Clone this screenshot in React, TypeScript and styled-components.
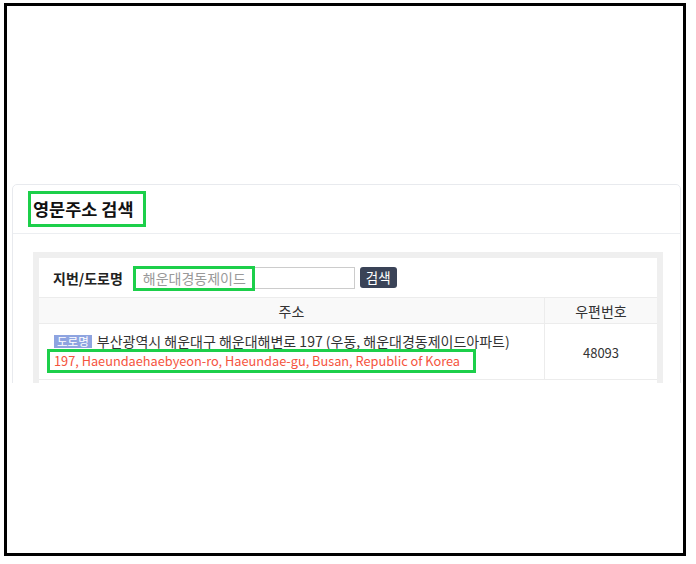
import styled, { createGlobalStyle } from 'styled-components';

const GREEN = '#1ccf4a';

const GlobalStyle = createGlobalStyle`
  body {
    margin: 0;
    background: #fff;
    font-family: "Noto Sans CJK KR", "Noto Sans", sans-serif;
    color: #333;
  }
`;

export default function App() {
  return (
    <>
      <GlobalStyle />
      <Frame>
        <Viewport>
          <Card>
            <CardHeader>
              <Title>
                <Mark>영문주소 검색</Mark>
              </Title>
            </CardHeader>
            <CardBody>
              <Panel>
                <PanelInner>
                  <SearchRow>
                    <Label>지번/도로명</Label>
                    <InputWrap>
                      <SearchInput defaultValue="해운대경동제이드" />
                      <InputMark />
                    </InputWrap>
                    <SearchButton type="button">검색</SearchButton>
                  </SearchRow>
                  <Table>
                    <thead>
                      <tr>
                        <Th $first>주소</Th>
                        <Th>우편번호</Th>
                      </tr>
                    </thead>
                    <tbody>
                      <tr>
                        <AddressCell>
                          <KoreanLine>
                            <Badge>도로명</Badge>
                            부산광역시 해운대구 해운대해변로 197 (우동, 해운대경동제이드아파트)
                          </KoreanLine>
                          <EnglishLine>
                            197, Haeundaehaebyeon-ro, Haeundae-gu, Busan, Republic of Korea
                          </EnglishLine>
                        </AddressCell>
                        <ZipCell>48093</ZipCell>
                      </tr>
                    </tbody>
                  </Table>
                </PanelInner>
              </Panel>
            </CardBody>
          </Card>
        </Viewport>
      </Frame>
    </>
  );
}

const Frame = styled.div`
  box-sizing: border-box;
  margin: 3px 0 0 4px;
  width: 682px;
  height: 553px;
  border: 3px solid #000;
  padding: 178px 2px 0 5px;
`;

const Viewport = styled.div`
  height: 199px;
  overflow: hidden;
`;

const Card = styled.div`
  border: 1px solid #e8eaee;
  border-radius: 5px;
  background: #fff;
`;

const CardHeader = styled.div`
  padding: 6px 15px;
  border-bottom: 1px solid #eceef1;
`;

const Title = styled.h3`
  margin: 0;
  font-size: 17.5px;
  font-weight: 700;
  color: #111;
  line-height: 30px;
`;

const Mark = styled.span`
  display: inline-block;
  border: 3px solid ${GREEN};
  padding: 0 9px 0 2px;
`;

const CardBody = styled.div`
  padding: 18px 17px 40px 20px;
`;

const Panel = styled.div`
  background: #efefef;
  padding: 6px;
`;

const PanelInner = styled.div`
  background: #fff;
  padding-bottom: 30px;
`;

const SearchRow = styled.div`
  display: flex;
  align-items: center;
  height: 39px;
  padding-left: 14px;
`;

const Label = styled.span`
  font-size: 14px;
  font-weight: 700;
  color: #222;
  margin-right: 11px;
`;

const InputWrap = styled.div`
  position: relative;
  display: flex;
`;

const SearchInput = styled.input`
  box-sizing: border-box;
  width: 221px;
  height: 22px;
  border: 1px solid #ccc;
  padding: 0 8px;
  font-family: inherit;
  font-size: 14px;
  color: #999;
  outline: none;
`;

const InputMark = styled.span`
  position: absolute;
  left: -1px;
  top: -1px;
  width: 122px;
  height: 25px;
  box-sizing: border-box;
  border: 3px solid ${GREEN};
  pointer-events: none;
`;

const SearchButton = styled.button`
  margin-left: 5px;
  height: 21px;
  padding: 0 6px;
  border: none;
  border-radius: 3px;
  background: #3a4357;
  color: #fff;
  font-family: inherit;
  font-size: 13.5px;
  line-height: 21px;
`;

const Table = styled.table`
  width: 100%;
  border-collapse: collapse;
  font-size: 14px;
`;

const Th = styled.th<{ $first?: boolean }>`
  width: ${(p) => (p.$first ? '505px' : 'auto')};
  height: 25px;
  padding: 0;
  background: #f9f9f9;
  border-top: 1px solid #ececec;
  border-bottom: 1px solid #ececec;
  border-left: ${(p) => (p.$first ? 'none' : '1px solid #ececec')};
  font-weight: 400;
  color: #333;
  text-align: center;
`;

const AddressCell = styled.td`
  padding: 9px 0 6px 15px;
  border-bottom: 1px solid #ececec;
  text-align: left;
`;

const ZipCell = styled.td`
  border-left: 1px solid #ececec;
  border-bottom: 1px solid #ececec;
  text-align: center;
  font-size: 13px;
  color: #333;
  padding-top: 3px;
`;

const KoreanLine = styled.div`
  line-height: 16px;
  color: #333;
`;

const Badge = styled.span`
  display: inline-block;
  margin-right: 5px;
  padding: 0 3px;
  background: #8ea4e0;
  color: #fff;
  font-size: 11.5px;
  line-height: 13px;
  vertical-align: 1px;
`;

const EnglishLine = styled.div`
  display: inline-block;
  margin-left: -7px;
  padding: 0 13px 0 4px;
  border: 3px solid ${GREEN};
  font-size: 12.75px;
  line-height: 18px;
  color: #f5533d;
`;
